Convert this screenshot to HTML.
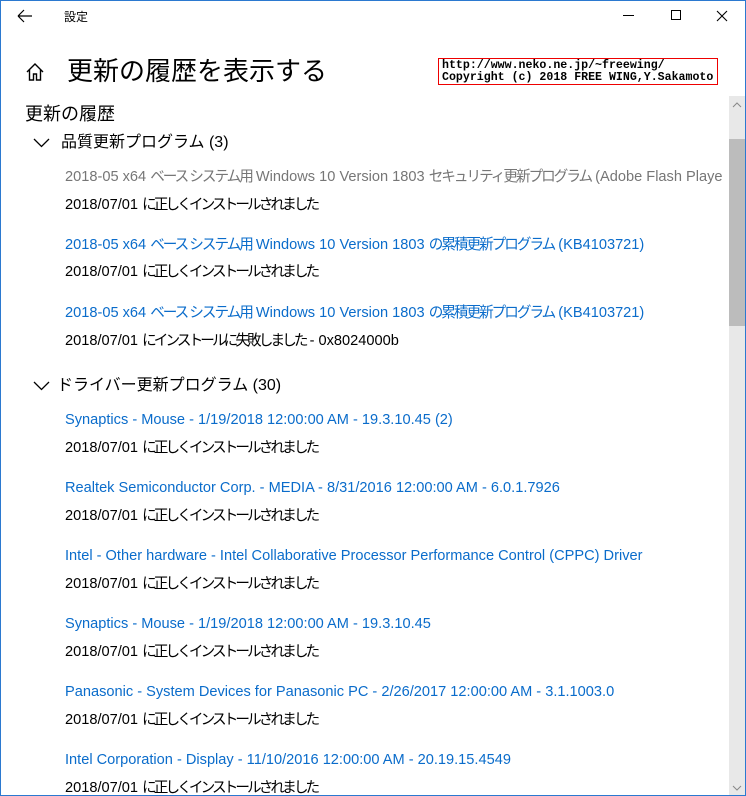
<!DOCTYPE html>
<html><head><meta charset="utf-8"><style>
*{margin:0;padding:0;box-sizing:border-box}
body{width:746px;height:796px;overflow:hidden;background:#fff;font-family:"Liberation Sans","Noto Sans CJK JP",sans-serif;color:#000;position:relative}
.frame{position:absolute;left:0;top:0;width:746px;height:796px;border:1px solid #2b79d0;pointer-events:none;z-index:10}
.a{position:absolute;white-space:nowrap}
.t{font-size:14.6px;left:65px;line-height:20px}
.b{color:#0a6ccb}
.g{color:#767676}
i{font-style:normal;letter-spacing:-2px}
.s i{letter-spacing:-2.9px}
.sb{position:absolute;left:729px;top:96px;width:16px;height:699px;background:#e8e8e8}
.th{position:absolute;left:729px;top:139px;width:16px;height:187px;background:#bcbcbc}
.clip{position:absolute;left:0;top:0;width:722px;height:796px;overflow:hidden}
</style></head><body>
<div class="frame"></div>
<svg class="a" style="left:17px;top:9px" width="16" height="14"><path d="M1 7H15M1 7L7 1M1 7L7 13" stroke="#000" stroke-width="1.2" fill="none"/></svg>
<div class="a" style="left:64px;top:8px;font-size:12px">設定</div>
<div class="a" style="left:623px;top:15px;width:11px;height:1px;background:#000"></div>
<div class="a" style="left:671px;top:10px;width:10px;height:10px;border:1px solid #000"></div>
<svg class="a" style="left:716px;top:10px" width="12" height="12"><path d="M1 1L11 11M11 1L1 11" stroke="#000" stroke-width="1.1"/></svg>
<svg class="a" style="left:25px;top:62px" width="20" height="20"><path d="M2 10L10 2L18 10M4.5 8V18H8.5V12H11.5V18H15.5V8" stroke="#000" stroke-width="1.4" fill="none"/></svg>
<div class="a" style="left:67px;top:54px;font-size:26px;line-height:34px">更新の履歴を表示する</div>
<div class="a" style="left:438px;top:58px;width:280px;height:27px;border:1px solid #e00;background:#fff;font-family:'Liberation Mono',monospace;font-weight:bold;font-size:11.6px;line-height:12px;padding:1px 0 0 3px">http://www.neko.ne.jp/~freewing/<br>Copyright (c) 2018 FREE WING,Y.Sakamoto</div>
<div class="a" style="left:25px;top:102px;font-size:18px;line-height:24px">更新の履歴</div>
<div class="clip">
<svg class="a" style="left:33px;top:138px" width="17" height="10"><path d="M1 1L8.5 8.5L16 1" stroke="#000" stroke-width="1.3" fill="none"/></svg>
<div class="a" style="left:61px;top:132px;font-size:16px;line-height:22px">品質更新プログラム (3)</div>
<div class="a t g" style="top:167px">2018-05 x64 <i>ベース システム用</i> Windows 10 Version 1803 <i>セキュリティ更新プログラム</i> (Adobe Flash Player <i>対応</i></div>
<div class="a t s" style="top:195px">2018/07/01 <i>に正しくインストールされました</i></div>
<div class="a t b" style="top:235px">2018-05 x64 <i>ベース システム用</i> Windows 10 Version 1803 <i>の累積更新プログラム</i> (KB4103721)</div>
<div class="a t s" style="top:262px">2018/07/01 <i>に正しくインストールされました</i></div>
<div class="a t b" style="top:303px">2018-05 x64 <i>ベース システム用</i> Windows 10 Version 1803 <i>の累積更新プログラム</i> (KB4103721)</div>
<div class="a t s" style="top:331px">2018/07/01 <i>にインストールに失敗しました</i> - 0x8024000b</div>
<svg class="a" style="left:33px;top:381px" width="17" height="10"><path d="M1 1L8.5 8.5L16 1" stroke="#000" stroke-width="1.3" fill="none"/></svg>
<div class="a" style="left:57px;top:375px;font-size:16px;line-height:22px">ドライバー更新プログラム (30)</div>
<div class="a t b" style="top:410px">Synaptics - Mouse - 1/19/2018 12:00:00 AM - 19.3.10.45 (2)</div>
<div class="a t s" style="top:438px">2018/07/01 <i>に正しくインストールされました</i></div>
<div class="a t b" style="top:478px">Realtek Semiconductor Corp. - MEDIA - 8/31/2016 12:00:00 AM - 6.0.1.7926</div>
<div class="a t s" style="top:506px">2018/07/01 <i>に正しくインストールされました</i></div>
<div class="a t b" style="top:546px">Intel - Other hardware - Intel Collaborative Processor Performance Control (CPPC) Driver</div>
<div class="a t s" style="top:574px">2018/07/01 <i>に正しくインストールされました</i></div>
<div class="a t b" style="top:614px">Synaptics - Mouse - 1/19/2018 12:00:00 AM - 19.3.10.45</div>
<div class="a t s" style="top:642px">2018/07/01 <i>に正しくインストールされました</i></div>
<div class="a t b" style="top:682px">Panasonic - System Devices for Panasonic PC - 2/26/2017 12:00:00 AM - 3.1.1003.0</div>
<div class="a t s" style="top:710px">2018/07/01 <i>に正しくインストールされました</i></div>
<div class="a t b" style="top:750px">Intel Corporation - Display - 11/10/2016 12:00:00 AM - 20.19.15.4549</div>
<div class="a t s" style="top:778px">2018/07/01 <i>に正しくインストールされました</i></div>
</div>
<div class="sb"></div><div class="th"></div>
<svg class="a" style="left:732px;top:102px" width="10" height="6"><path d="M1 5L5 1L9 5" stroke="#888" fill="none"/></svg>
<svg class="a" style="left:732px;top:785px" width="10" height="6"><path d="M1 1L5 5L9 1" stroke="#888" fill="none"/></svg>
</body></html>
